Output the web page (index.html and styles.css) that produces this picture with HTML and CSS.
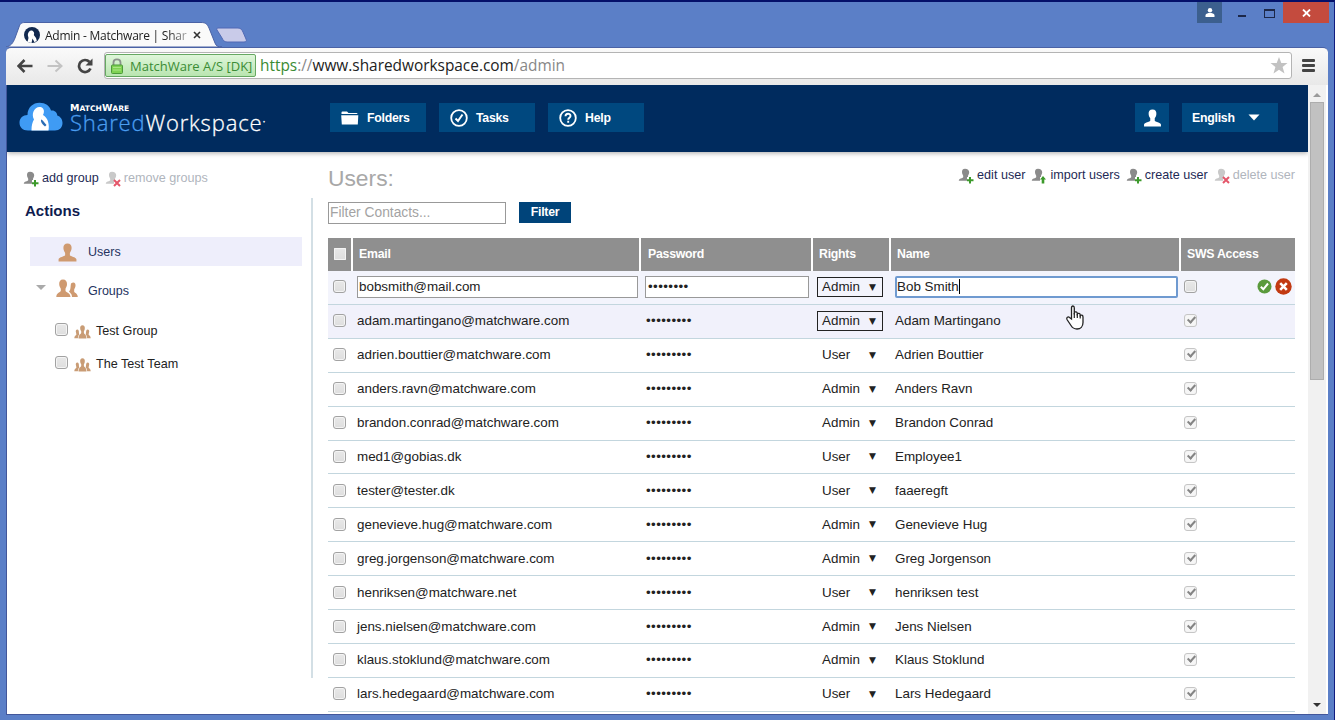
FILE: index.html
```html
<!DOCTYPE html>
<html lang="en">
<head>
  <meta charset="UTF-8" />
  <meta name="viewport" content="width=device-width, initial-scale=1.0"/>
  <title>Admin - Matchware | SharedWorkspace</title>
  <link rel="stylesheet" href="styles.css">
</head>
<body>
  <svg class="defs" width="0" height="0">
    <symbol id="person" viewBox="0 0 20 20"><path d="M10 0.5C6.8 0.5 5.5 2.6 5.7 5.6C5.8 8 6.9 9.4 7.5 10.4V13C6.8 14.2 1 15 0.6 17.2V19.5H19.4V17.2C19 15 13.2 14.2 12.5 13V10.4C13.1 9.4 14.2 8 14.3 5.6C14.5 2.6 13.2 0.5 10 0.5Z"/></symbol>
    <symbol id="pair" viewBox="0 0 22 19"><path d="M15 4.5C17.7 2.200 20 4 19.500 7C19.300 8.500 18.500 9.500 18.200 10.500V13C19 14 21.800 14.500 21.800 18H16C16 14.500 13.500 13.700 13 12.500C15 11 14.300 7.500 15 4.500Z"/><path d="M7 .5C4.200.5 3 2.600 3.200 5.300C3.300 7.400 4.200 8.700 4.800 9.700V12C4 13.500.3 14 .3 18H14.500C14.500 14 10.200 13.500 9.500 12V9.700C10 8.700 11 7.400 11 5.300C11.200 2.600 9.800.5 7 .5Z"/></symbol>
    <symbol id="trio" viewBox="0 0 17 14"><path d="M8.500.3C6.800.3 6 1.600 6.200 3.400C6.300 4.800 6.900 5.500 7.200 6.200V8C6.500 9.300 4.500 9.800 4.500 13.500H12.500C12.500 9.800 10.500 9.300 9.900 8V6.200C10.200 5.500 10.700 4.800 10.800 3.400C11 1.600 10.200.3 8.500.3Z"/><path d="M3.500 4.500C1.800 4.500 1.500 6 2 7.600L2.400 9.500C2 10.500.3 10.800.3 13.300H3.900C3.900 11 4.800 10.300 5.300 9.300C4.600 8 5.500 5 3.500 4.500ZM13.500 4.500C15.200 4.500 15.500 6 15 7.600L14.600 9.500C15 10.500 16.700 10.800 16.700 13.300H13.100C13.100 11 12.200 10.300 11.700 9.300C12.400 8 11.500 5 13.500 4.500Z"/></symbol>
    <symbol id="bust" viewBox="0 0 16 16"><path d="M7 .8C4.600.8 3.900 2.400 4 4.300C4.100 6 4.800 7 5.200 7.700V9.200C4.800 10.200.8 10.300.8 12.800H9V9H10V7.700C10.500 7 11 6 11.200 4.300C11.300 2.400 9.500.8 7 .8Z"/></symbol>
  </svg>

  <div class="window">
    <div class="titlebar">
      <div class="tabs">
        <svg class="tab-shape" width="242" height="25" viewBox="0 0 242 25">
          <path d="M0 25C5 24 7 21 9 16L13 5C14 2 15 .5 19 .5H195C200 .5 201 2 203 6L209 21C210 24 212 25 216 25Z" fill="#fafafa" stroke="#4a62a5"/>
          <path d="M212 6H232C235 6 236 8 237 10L240 17C241 19 240 20 238 20H221C218 20 217 18 216 16L211 8C210.500 7 211 6 212 6Z" fill="#c9cbe9" stroke="#5069b4"/>
        </svg>
        <div class="tab">
          <svg width="16" height="16" viewBox="0 0 16 16"><circle cx="8" cy="8" r="8" fill="#11284e"/><path d="M3.500 15L4.500 11L3.800 8C4 5 6.500 2.500 8.800 4C10.500 5 10.300 7 9.800 8L12 11L12.800 13.800L10.500 15.300L8.500 11.500L7.500 16Z" fill="#fff"/></svg>
          <span class="tab-title">Admin - Matchware | Shar</span>
          <svg class="tab-close" width="8" height="8" viewBox="0 0 8 8"><path d="M1 1L7 7M7 1L1 7" stroke="#333" stroke-width="1.600"/></svg>
        </div>
      </div>
      <div class="controls">
        <div class="profile"><svg width="10" height="9" viewBox="0 0 10 9"><circle cx="5" cy="2.200" r="2.200" fill="#fff"/><path d="M.5 9V7C1 5.500 3 5 5 5S9 5.500 9.500 7V9Z" fill="#fff"/></svg></div>
        <div class="minimize"></div>
        <div class="maximize"></div>
        <div class="close"><svg width="9" height="8" viewBox="0 0 9 8"><path d="M1 .5L8 7.500M8 .5L1 7.500" stroke="#fff" stroke-width="1.800"/></svg></div>
      </div>
    </div>

    <div class="toolbar">
      <svg class="nav" width="16" height="14" viewBox="0 0 16 14"><path d="M15.500 7H2M7.500 1L1.500 7L7.500 13" fill="none" stroke="#444" stroke-width="2.600"/></svg>
      <svg class="nav" width="16" height="14" viewBox="0 0 16 14"><path d="M.5 7H14M8.500 1.500L14.500 7L8.500 12.500" fill="none" stroke="#c3c3c3" stroke-width="2"/></svg>
      <svg class="nav" width="16" height="16" viewBox="0 0 16 16"><path d="M12.500 4A6 6 0 1 0 13.500 10.500" fill="none" stroke="#444" stroke-width="2.700"/><path d="M15.500.5V7.500H8.500Z" fill="#444"/></svg>
      <div class="omnibox">
        <div class="badge">
          <svg width="12" height="16" viewBox="0 0 12 16"><path d="M2.500 8V4.500C2.500.3 9.500.3 9.500 4.500V8" fill="none" stroke="#8b938b" stroke-width="1.800"/><rect x=".5" y="7" width="11" height="8.500" rx="1" fill="#7fd253" stroke="#4c9b3a"/><path d="M2 9.500H10M2 12H10" stroke="#a9e784"/></svg>
          <span>MatchWare A/S [DK]</span>
        </div>
        <div class="url"><span class="secure">https</span><span class="dim">://</span>www.sharedworkspace.com<span class="dim">/admin</span></div>
        <svg class="star" width="18" height="17" viewBox="0 0 18 17"><path d="M9 0L11.300 6H17.500L12.600 10L14.500 16.500L9 12.700L3.500 16.500L5.400 10L.5 6H6.700Z" fill="#c2c2c2"/></svg>
      </div>
      <div class="menu"><i></i><i></i><i></i></div>
    </div>

    <div class="viewport">
      <div class="page">
        <div class="header">
          <div class="logo">
            <svg width="44" height="30" viewBox="0 0 44 30">
              <path d="M9 28.500C3.500 28.500.5 25 .5 20.500C.5 16 4 13 8.500 13C8.500 5.500 14 .8 20.500.8C26.500.8 30.500 3.800 32 8.500C36 8 38 10.500 38.300 13.500C41.500 14.500 43.500 17.500 43.500 21C43.500 25.500 40.500 28.500 36 28.500Z" fill="#3f9bf4"/>
              <path d="M12.500 28.500C12.500 23 13.500 20 15 17.500C13.500 15 13.500 11.500 14.500 9.500C16 5.500 21 3.500 24 6.500C25.500 8.500 25 11 24 13C26.500 14.500 28.500 17 29 19.500C30 23 30 25.500 29.500 28.500Z" fill="#fff"/>
              <path d="M22 17.500C23.500 17.500 25 20 27.500 23L26 24.500C23 22 21.500 20 22 17.500Z" fill="#2a6cb4"/>
            </svg>
            <div class="wordmark">
              <div class="brand">M<small>ATCH</small>W<small>ARE</small></div>
              <div class="product"><span>Shared</span>Workspace<sup>•</sup></div>
            </div>
          </div>
          <div class="topnav">
            <div class="btn">
              <svg width="18" height="14" viewBox="0 0 18 14"><path d="M.5 1.500Q.5 .5 1.500 .5H6L7.500 2H15.500Q16.500 2 16.500 3H.5ZM.2 4.200H17.300L16.800 13.500H.8Z" fill="#fff"/></svg>
              <span>Folders</span>
            </div>
            <div class="btn">
              <svg width="18" height="18" viewBox="0 0 18 18"><circle cx="9" cy="9" r="7.800" fill="none" stroke="#fff" stroke-width="1.800"/><path d="M5.500 9.500L8 12L12.500 5.500" fill="none" stroke="#fff" stroke-width="2"/></svg>
              <span>Tasks</span>
            </div>
            <div class="btn">
              <svg width="18" height="18" viewBox="0 0 18 18"><circle cx="9" cy="9" r="7.800" fill="none" stroke="#fff" stroke-width="1.800"/><path d="M6.500 7.200C6.500 4 11.500 4 11.500 7C11.500 8.700 9.200 8.700 9.200 10.700M9.200 11.800V13.800" fill="none" stroke="#fff" stroke-width="1.900"/></svg>
              <span>Help</span>
            </div>
          </div>
          <div class="account">
            <div class="btn user"><svg width="19" height="18" fill="#fff"><use href="#person"/></svg></div>
            <div class="btn lang"><span>English</span><svg width="12" height="7" viewBox="0 0 12 7"><path d="M.5 .5H11.500L6 6.500Z" fill="#fff"/></svg></div>
          </div>
        </div>

        <div class="content">
          <div class="sidebar">
            <div class="group-links">
              <a class="link"><svg width="16" height="16" viewBox="0 0 16 16"><use href="#bust" fill="#8b8b8b"/><path d="M12 9V15.500M9 12.200H15.500" stroke="#3c9a2b" stroke-width="2"/></svg>add group</a>
              <a class="link off"><svg width="16" height="16" viewBox="0 0 16 16"><use href="#bust" fill="#c9c9c9"/><path d="M9 9L15 15M15 9L9 15" stroke="#e4566a" stroke-width="2"/></svg>remove groups</a>
            </div>
            <div class="side-body">
              <h2>Actions</h2>
              <div class="item active"><svg width="19" height="19" fill="#cf9a70"><use href="#person"/></svg><span>Users</span></div>
              <div class="item groups"><i class="caret"></i><svg width="22" height="19" fill="#cf9a70"><use href="#pair"/></svg><span>Groups</span></div>
              <div class="item sub"><i class="box"></i><svg width="17" height="14" fill="#c99c75"><use href="#trio"/></svg><span>Test Group</span></div>
              <div class="item sub"><i class="box"></i><svg width="17" height="14" fill="#c99c75"><use href="#trio"/></svg><span>The Test Team</span></div>
            </div>
          </div>

          <div class="main">
            <div class="main-head">
              <h1>Users:</h1>
              <div class="user-links">
                <a class="link"><svg width="16" height="16" viewBox="0 0 16 16"><use href="#bust" fill="#8b8b8b"/><path d="M12 9V15.500M9 12.200H15.500" stroke="#3c9a2b" stroke-width="2"/></svg>edit user</a>
                <a class="link"><svg width="16" height="16" viewBox="0 0 16 16"><use href="#bust" fill="#8b8b8b"/><path d="M12 8L15 11.500H13.300V15.500H10.700V11.500H9Z" fill="#3c9a2b"/></svg>import users</a>
                <a class="link"><svg width="16" height="16" viewBox="0 0 16 16"><use href="#bust" fill="#8b8b8b"/><path d="M12 9V15.500M9 12.200H15.500" stroke="#3c9a2b" stroke-width="2"/></svg>create user</a>
                <a class="link off"><svg width="16" height="16" viewBox="0 0 16 16"><use href="#bust" fill="#c9c9c9"/><path d="M9 9L15 15M15 9L9 15" stroke="#e4566a" stroke-width="2"/></svg>delete user</a>
              </div>
            </div>
            <div class="filter">
              <div class="filter-input">Filter Contacts...</div>
              <div class="filter-btn">Filter</div>
            </div>

            <div class="table">
              <div class="row head"><div><i class="box"></i></div><div>Email</div><div>Password</div><div>Rights</div><div>Name</div><div>SWS Access</div></div>
              <div class="row edit">
                <div><i class="box"></i></div>
                <div><span class="field">bobsmith@mail.com</span></div>
                <div><span class="field dots">••••••••</span></div>
                <div><span class="select boxed">Admin<b>▼</b></span></div>
                <div><span class="field focus">Bob Smith<i class="cursor"></i></span></div>
                <div>
                  <i class="box"></i>
                  <span class="confirm">
                    <svg width="15" height="15" viewBox="0 0 15 15"><circle cx="7.500" cy="7.500" r="7" fill="#5a9a3c"/><path d="M3.800 7.800L6.300 10.300L11 4.500" fill="none" stroke="#fff" stroke-width="2"/></svg>
                    <svg width="17" height="17" viewBox="0 0 17 17"><circle cx="8.500" cy="8.500" r="8.200" fill="#c23a12"/><path d="M5.200 5.200L11.800 11.800M11.800 5.200L5.200 11.800" stroke="#fff" stroke-width="2.600"/></svg>
                  </span>
                </div>
              </div>
              <div class="row hover"><div><i class="box"></i></div><div>adam.martingano@matchware.com</div><div class="dots">•••••••••</div><div><span class="select boxed">Admin<b>▼</b></span></div><div>Adam Martingano</div><div><i class="box on"></i></div></div>
              <div class="row"><div><i class="box"></i></div><div>adrien.bouttier@matchware.com</div><div class="dots">•••••••••</div><div><span class="select">User<b>▼</b></span></div><div>Adrien Bouttier</div><div><i class="box on"></i></div></div>
              <div class="row"><div><i class="box"></i></div><div>anders.ravn@matchware.com</div><div class="dots">•••••••••</div><div><span class="select">Admin<b>▼</b></span></div><div>Anders Ravn</div><div><i class="box on"></i></div></div>
              <div class="row"><div><i class="box"></i></div><div>brandon.conrad@matchware.com</div><div class="dots">•••••••••</div><div><span class="select">Admin<b>▼</b></span></div><div>Brandon Conrad</div><div><i class="box on"></i></div></div>
              <div class="row"><div><i class="box"></i></div><div>med1@gobias.dk</div><div class="dots">•••••••••</div><div><span class="select">User<b>▼</b></span></div><div>Employee1</div><div><i class="box on"></i></div></div>
              <div class="row"><div><i class="box"></i></div><div>tester@tester.dk</div><div class="dots">•••••••••</div><div><span class="select">User<b>▼</b></span></div><div>faaeregft</div><div><i class="box on"></i></div></div>
              <div class="row"><div><i class="box"></i></div><div>genevieve.hug@matchware.com</div><div class="dots">•••••••••</div><div><span class="select">Admin<b>▼</b></span></div><div>Genevieve Hug</div><div><i class="box on"></i></div></div>
              <div class="row"><div><i class="box"></i></div><div>greg.jorgenson@matchware.com</div><div class="dots">•••••••••</div><div><span class="select">Admin<b>▼</b></span></div><div>Greg Jorgenson</div><div><i class="box on"></i></div></div>
              <div class="row"><div><i class="box"></i></div><div>henriksen@matchware.net</div><div class="dots">•••••••••</div><div><span class="select">User<b>▼</b></span></div><div>henriksen test</div><div><i class="box on"></i></div></div>
              <div class="row"><div><i class="box"></i></div><div>jens.nielsen@matchware.com</div><div class="dots">•••••••••</div><div><span class="select">Admin<b>▼</b></span></div><div>Jens Nielsen</div><div><i class="box on"></i></div></div>
              <div class="row"><div><i class="box"></i></div><div>klaus.stoklund@matchware.com</div><div class="dots">•••••••••</div><div><span class="select">Admin<b>▼</b></span></div><div>Klaus Stoklund</div><div><i class="box on"></i></div></div>
              <div class="row"><div><i class="box"></i></div><div>lars.hedegaard@matchware.com</div><div class="dots">•••••••••</div><div><span class="select">User<b>▼</b></span></div><div>Lars Hedegaard</div><div><i class="box on"></i></div></div>
            </div>
          </div>
        </div>
      </div>
      <div class="scrollbar"><i class="up"></i><div class="thumb"></div><i class="down"></i></div>
    </div>
  </div>

  <svg class="pointer" width="20" height="25" viewBox="0 0 20 25"><path d="M6.500 14V3C6.500.3 9.300.3 9.300 3V9.500V7.500C10 6.500 12.300 6.700 12.300 8.500V10.500V9C13 8 15.200 8.200 15.200 10V11.500V10.500C16 9.800 18 10 18 12V17.500C18 21.500 15.500 24 12 24C9 24 7.500 23 6 20.500L2 14.500C1 12.500 3.200 11.200 4.500 12.500Z" fill="#fff" stroke="#222" stroke-width="1.300"/><path d="M9.300 8V13M12.300 9V13M15.200 10.500V13.500" stroke="#222" stroke-width="1.200"/></svg>
</body>
</html>
```
FILE: styles.css
```css
html, body {
  margin: 0;
  padding: 0;
  height: 100%;
  overflow: hidden;
  font-family: "Liberation Sans", Arial, sans-serif;
  font-size: 13.4px;
  color: #222;
}

.defs {
  position: absolute;
}

.window {
  box-sizing: border-box;
  width: 1335px;
  height: 720px;
  padding: 0 6px 5px;
  background: #5b7fc7;
  border-top: 2px solid #04106a;
  border-right: 1px solid #101c80;
  display: flex;
  flex-direction: column;
}

/* title bar */
.titlebar {
  height: 45px;
  flex: none;
  display: flex;
  justify-content: space-between;
}

.tabs {
  position: relative;
  width: 260px;
  padding-top: 20px;
}

.tab-shape {
  position: absolute;
  left: 0;
  top: 20px;
}

.tab {
  position: relative;
  display: flex;
  align-items: center;
  height: 26px;
  padding-left: 18px;
  font-family: "Open Sans", sans-serif;
  font-size: 12px;
  letter-spacing: -0.25px;
}

.tab-title {
  width: 144px;
  margin-left: 5px;
  overflow: hidden;
  white-space: nowrap;
  -webkit-mask-image: linear-gradient(90deg, #000 85%, rgba(0, 0, 0, 0.3));
}

.tab-close {
  margin-left: 4px;
}

.controls {
  display: flex;
  height: 21px;
  margin-right: -1px;
}

.profile {
  width: 25px;
  background: #3c5f8e;
  display: flex;
  align-items: center;
  justify-content: center;
}

.minimize {
  width: 8px;
  height: 2px;
  margin: 13px 18px 0 16px;
  background: #1c2748;
}

.maximize {
  box-sizing: border-box;
  width: 11px;
  height: 9px;
  margin: 7px 8px 0 0;
  border: 1px solid #1c2748;
  border-top-width: 2px;
}

.close {
  width: 46px;
  background: #c44b3e;
  display: flex;
  align-items: center;
  justify-content: center;
}

/* toolbar */
.toolbar {
  box-sizing: border-box;
  height: 38px;
  flex: none;
  display: flex;
  align-items: center;
  padding: 0 13px 2px 11px;
  border-top: 1px solid #4a62a5;
  border-radius: 5px 5px 0 0;
  background: linear-gradient(#fafafa, #e8e8e8);
}

.nav {
  margin-right: 14px;
}

.omnibox {
  box-sizing: border-box;
  flex: 1;
  height: 27px;
  margin: 0 10px 0 -3px;
  padding: 0 3px 0 0;
  display: flex;
  align-items: center;
  background: #fff;
  border: 1px solid #b4b4b4;
  border-radius: 3px;
}

.badge {
  box-sizing: border-box;
  width: 151px;
  height: 23px;
  padding-left: 5px;
  display: flex;
  align-items: center;
  gap: 7px;
  white-space: nowrap;
  background: linear-gradient(#dff6da, #b9e5b0);
  border: 1px solid #66a862;
  border-radius: 2px;
  font-family: "Open Sans", sans-serif;
  font-size: 13px;
  color: #3b8c35;
}

.url {
  flex: 1;
  padding-left: 4px;
  font-family: "Open Sans", sans-serif;
  font-size: 15.4px;
  color: #222;
}

.secure {
  color: #3a8b32;
}

.dim {
  color: #888;
}

.menu i {
  display: block;
  width: 13px;
  height: 3px;
  margin: 2px 0;
  border-radius: 1px;
  background: #444;
}

/* page */
.viewport {
  flex: 1;
  min-height: 0;
  display: flex;
  background: #fff;
  border: solid #42569a;
  border-width: 0 0 1px 1px;
}

.page {
  width: 1301px;
  overflow: hidden;
}

.header {
  height: 67px;
  display: flex;
  background: #002b5e;
  box-shadow: 0 1px 5px rgba(0, 0, 0, 0.35);
}

.logo {
  display: flex;
  width: 311px;
  padding: 17px 0 0 12px;
}

.wordmark {
  margin-left: 7px;
  color: #fff;
}

.brand {
  height: 8px;
  font: bold 9.5px/11px "DejaVu Sans", sans-serif;
}

.brand small {
  font-size: 7.6px;
}

.product {
  font: 300 22px/24px "Open Sans", sans-serif;
  letter-spacing: 0.85px;
  -webkit-text-stroke: 0.3px;
  white-space: nowrap;
}

.product span {
  color: #4a9df0;
}

.product sup {
  font-size: 8px;
  line-height: 0;
  vertical-align: 7px;
  letter-spacing: 0;
}

.topnav {
  display: flex;
  gap: 13px;
  padding-top: 18px;
}

.btn {
  box-sizing: border-box;
  display: flex;
  align-items: center;
  gap: 8px;
  width: 96px;
  height: 29px;
  padding-left: 11px;
  background: #00487f;
  color: #fff;
  font-size: 12.3px;
  font-weight: bold;
  letter-spacing: -0.25px;
}

.account {
  display: flex;
  gap: 13px;
  margin-left: auto;
  padding: 18px 30px 0 0;
}

.user {
  width: 34px;
  padding-left: 8px;
}

.lang {
  padding-left: 10px;
  gap: 13px;
}

.content {
  display: flex;
  padding: 12px 13px 0 16px;
}

.link {
  display: inline-flex;
  align-items: center;
  gap: 3px;
  color: #1e2a55;
  font-size: 12.6px;
  white-space: nowrap;
}

.link svg {
  position: relative;
  top: 1px;
}

.link.off {
  color: #b0b5bd;
}

.sidebar {
  width: 290px;
}

.group-links {
  display: flex;
  gap: 6px;
  height: 34px;
  padding-top: 6px;
  box-sizing: border-box;
}

.group-links .link {
  height: 16px;
}

.side-body {
  box-sizing: border-box;
  height: 480px;
  border-right: 2px solid #d3dfe5;
}

h2 {
  margin: 0 0 15px 2px;
  padding-top: 2px;
  font-size: 15px;
  line-height: 22px;
  color: #0f1c4f;
}

.item {
  display: flex;
  align-items: center;
  color: #25335f;
  font-size: 12.5px;
}

.active {
  box-sizing: border-box;
  width: 272px;
  height: 29px;
  margin-left: 7px;
  padding: 1px 0 0 28px;
  background: #eeeefb;
}

.active span {
  margin-left: 11px;
}

.groups {
  height: 50px;
  padding-left: 13px;
}

.groups svg {
  margin: -5px 10px 0 10px;
}

.caret {
  margin-top: -7px;
  border: solid transparent;
  border-width: 5px 5px 0;
  border-top-color: #aaa;
}

.sub {
  height: 33px;
  padding-left: 32px;
  font-size: 12.6px;
  color: #222;
}

.sub .box {
  margin-top: -7px;
}

.sub svg {
  margin: -1px 5px 0 6px;
}

.sub span {
  margin-top: -4px;
}

.box {
  box-sizing: border-box;
  display: inline-block;
  flex: none;
  width: 13px;
  height: 13px;
  background: linear-gradient(#e8e8e8, #dedede);
  border: 1px solid #a2a2a2;
  border-radius: 3px;
  box-shadow: inset 0 0 0 1px #f4f4f4;
}

.box.on {
  background: #f6f6f6;
  border-color: #c6c6c6;
}

.box.on::after {
  content: "";
  display: block;
  width: 3px;
  height: 6px;
  margin: 0 0 0 4px;
  border: solid #858585;
  border-width: 0 2px 2px 0;
  transform: rotate(42deg);
}

/* main column */
.main {
  width: 967px;
  margin-left: 15px;
}

.main-head {
  display: flex;
  justify-content: space-between;
  height: 38px;
}

h1 {
  margin: 0;
  font-size: 22.8px;
  font-weight: normal;
  line-height: 28px;
  color: #a8a8a8;
}

.user-links {
  display: flex;
  gap: 6px;
  height: 22px;
}

.filter {
  display: flex;
  gap: 13px;
  height: 36px;
}

.filter-input {
  box-sizing: border-box;
  width: 178px;
  height: 22px;
  padding-left: 1px;
  border: 1px solid #999;
  color: #a3a3a3;
  font-size: 13.8px;
  line-height: 20px;
}

.filter-btn {
  width: 52px;
  height: 21px;
  background: #00447a;
  color: #fff;
  font-size: 12.3px;
  font-weight: bold;
  letter-spacing: -0.25px;
  line-height: 21px;
  text-align: center;
}

.row {
  box-sizing: border-box;
  display: grid;
  grid-template-columns: 23px 286px 170px 76px 288px 114px;
  column-gap: 2px;
  height: 33.92px;
  border-bottom: 1px solid #c3d6de;
}

.row > div {
  display: flex;
  align-items: center;
  padding: 0 0 1px 4px;
  min-width: 0;
  white-space: nowrap;
}

.row > div:first-child {
  padding-left: 5px;
}

.row > div:nth-child(3) {
  padding-left: 5px;
}

.row > div:last-child {
  padding-left: 3px;
}

.head {
  height: 33px;
  border: 0;
}

.row.head > div {
  padding-left: 6px;
  background: #8f8f8f;
  color: #fff;
  font-size: 12.3px;
  font-weight: bold;
  letter-spacing: -0.25px;
}

.row.head > div:nth-child(3) {
  padding-left: 7px;
}

.head .box {
  border: 0;
  border-radius: 1px;
  width: 12px;
  height: 12px;
}

.edit {
  background: #f3f4fc;
}

.hover {
  background: #f1f1fb;
}

.field {
  box-sizing: border-box;
  display: flex;
  align-items: center;
  width: 281px;
  height: 22px;
  padding-left: 1px;
  background: #fff;
  border: 1px solid #999;
}

.field.dots {
  width: 164px;
  margin-left: -1px;
  padding-left: 2px;
}

.field.focus {
  width: 283px;
  padding-left: 0;
  border: 2px solid #6f9ad0;
  border-radius: 2px;
}

.cursor {
  width: 1px;
  height: 15px;
  background: #000;
}

.dots {
  letter-spacing: 0.4px;
}

.select {
  box-sizing: border-box;
  display: flex;
  align-items: center;
  justify-content: space-between;
  width: 66px;
  height: 20px;
  padding: 0 6px 0 4px;
  border: 1px solid transparent;
}

.boxed {
  border-color: #222;
}

.select b {
  font: 9px "DejaVu Sans", sans-serif;
}

.confirm {
  display: flex;
  align-items: center;
  gap: 3px;
  margin-left: 60px;
}

.scrollbar {
  width: 18px;
  display: flex;
  flex-direction: column;
  align-items: center;
  background: #f1f1f1;
}

.up {
  margin: 8px 0 5px;
  border: solid transparent;
  border-width: 0 4px 4px;
  border-bottom-color: #9a9a9a;
}

.thumb {
  box-sizing: border-box;
  width: 14px;
  height: 278px;
  background: #c1c1c1;
  border: 1px solid #adadad;
}

.down {
  margin-top: auto;
  margin-bottom: 7px;
  border: solid transparent;
  border-width: 4px 4px 0;
  border-top-color: #333;
}

.pointer {
  position: absolute;
  left: 1065px;
  top: 305px;
}
```
